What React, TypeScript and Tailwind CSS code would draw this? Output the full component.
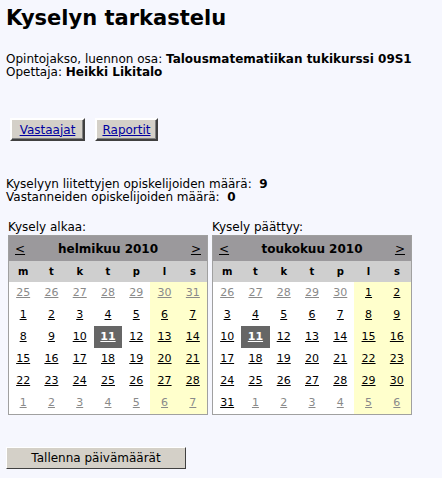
const font = { fontFamily: '"DejaVu Sans", Verdana, sans-serif' };

type Day = { d: number; other?: boolean; sel?: boolean };

function buildDays(prevStart: number, prevEnd: number, len: number, nextCount: number, sel: number): Day[] {
  const out: Day[] = [];
  for (let i = prevStart; i <= prevEnd; i++) out.push({ d: i, other: true });
  for (let i = 1; i <= len; i++) out.push({ d: i, sel: i === sel });
  for (let i = 1; i <= nextCount; i++) out.push({ d: i, other: true });
  return out;
}

const weekdays = ['m', 't', 'k', 't', 'p', 'l', 's'];

function Calendar({ label, month, days }: { label: string; month: string; days: Day[] }) {
  return (
    <div className="flex flex-col">
      <div className="pb-px text-[12px] leading-[13px] text-black">{label}</div>
      <div className="w-[200px] border border-[#a0a0a0] bg-white">
        <div className="flex h-[25px] items-center justify-between bg-[#9b999c] px-[6px] text-[12px] font-bold">
          <span className="font-normal underline">&lt;</span>
          <span>{month}</span>
          <span className="font-normal underline">&gt;</span>
        </div>
        <div className="grid h-[21px] grid-cols-7 items-center bg-[#cfcfcf] text-[10px] font-bold">
          {weekdays.map((w, i) => (
            <div key={i} className="text-center">{w}</div>
          ))}
        </div>
        <div className="grid grid-cols-7">
          {days.map((day, i) => {
            const weekend = i % 7 >= 5;
            let cls = 'h-[22px] flex items-center justify-center text-[11px] underline ';
            if (day.sel) cls += 'bg-[#666666] text-white font-bold';
            else if (weekend) cls += 'bg-[#ffffcc] ';
            if (!day.sel) cls += day.other ? 'text-[#8a8a8a]' : 'text-black';
            return (
              <div key={i} className={cls}>
                {day.d}
              </div>
            );
          })}
        </div>
      </div>
    </div>
  );
}

export default function App() {
  const feb = buildDays(25, 31, 28, 7, 11);
  const may = buildDays(26, 30, 31, 6, 11);
  const btn =
    'h-[23px] border-2 border-t-white border-l-white border-r-[#404040] border-b-[#404040] bg-[#d4d0c8] text-[12px] leading-[14px] text-[#0000a0] underline shadow-[inset_-1px_-1px_0_#808080]';
  return (
    <div className="min-h-[478px] bg-[#f6f7fe] px-[6px] pt-[5px] text-black" style={font}>
      <h1 className="text-[21px] font-bold leading-[26px]">Kyselyn tarkastelu</h1>
      <div className="mt-[22px] text-[12px] leading-[13px]">
        <div>
          Opintojakso, luennon osa: <b>Talousmatematiikan tukikurssi 09S1</b>
        </div>
        <div>
          Opettaja: <b>Heikki Likitalo</b>
        </div>
      </div>
      <div className="mt-[39px] flex gap-[10px] pl-[4px]">
        <button className={`${btn} w-[75px]`}>Vastaajat</button>
        <button className={`${btn} w-[63px]`}>Raportit</button>
      </div>
      <div className="mt-[37px] text-[12px] leading-[13px]">
        <div>
          Kyselyyn liitettyjen opiskelijoiden määrä:&nbsp; <b>9</b>
        </div>
        <div>
          Vastanneiden opiskelijoiden määrä:&nbsp; <b>0</b>
        </div>
      </div>
      <div className="mt-[17px] flex gap-[4px] pl-[2px]">
        <Calendar label="Kysely alkaa:" month="helmikuu 2010" days={feb} />
        <Calendar label="Kysely päättyy:" month="toukokuu 2010" days={may} />
      </div>
      <button className="mt-[32px] h-[22px] w-[180px] border border-t-white border-l-white border-r-[#404040] border-b-[#404040] bg-[#d4d0c8] text-[12px] text-black">
        Tallenna päivämäärät
      </button>
    </div>
  );
}
